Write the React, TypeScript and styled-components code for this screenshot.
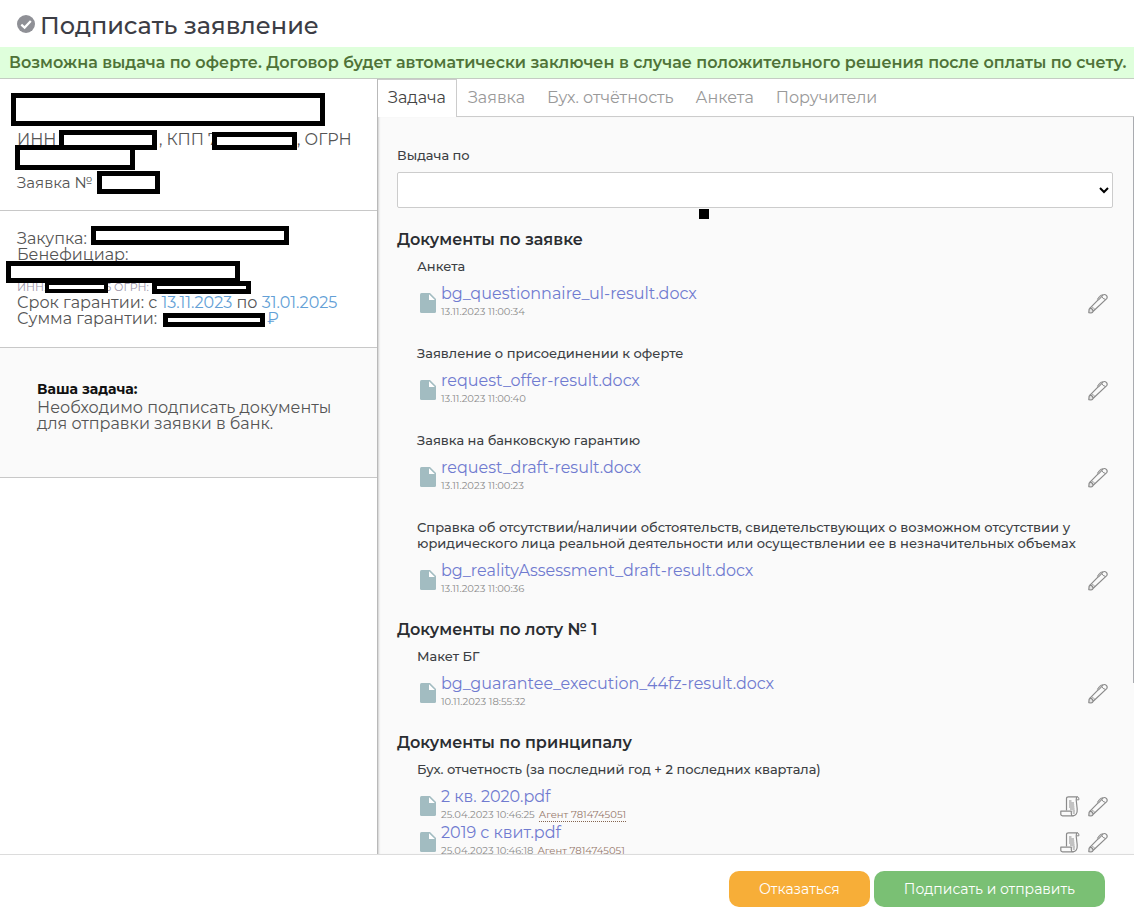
import React from "react";
import styled, { createGlobalStyle } from "styled-components";

const GlobalStyle = createGlobalStyle`
  *, *::before, *::after { box-sizing: border-box; }
  body {
    margin: 0;
    background: #fff;
    color: #25272b;
    font-family: Montserrat, Inter, "Open Sans", sans-serif;
    font-size: 16px;
    font-weight: 400;
  }
  button, select { font: inherit; }
`;

const Page = styled.div`
  display: flex;
  flex-direction: column;
  height: 100vh;
`;

const Header = styled.header`
  display: flex;
  align-items: center;
  gap: 5px;
  padding: 2px 17px 0;
  height: 47px;
  flex: none;
`;

const Title = styled.h1`
  margin: 0;
  font-size: 24px;
  line-height: 30px;
  padding-top: 2px;
  font-weight: 500;
  color: #3c3d45;
`;

const Banner = styled.p`
  margin: 0;
  height: 32px;
  flex: none;
  padding: 0 9px;
  background: #dfffdc;
  border-bottom: 1px solid #c4ccc3;
  color: #4f7338;
  font-size: 16px;
  line-height: 31px;
  font-weight: 600;
  white-space: nowrap;
  overflow: hidden;
`;

const Body = styled.div`
  display: grid;
  grid-template-columns: 378px minmax(0, 1fr);
  flex: 1;
  min-height: 0;
`;

const Sidebar = styled.aside`
  border-right: 1px solid #b9b9b9;
  overflow: hidden;
`;

const Panel = styled.section<{ $muted?: boolean; $pad: string }>`
  position: relative;
  padding: ${(p) => p.$pad};
  border-bottom: 1px solid #c8c8c8;
  background: ${(p) => (p.$muted ? "#fafafa" : "#fff")};
  color: #555;
`;

const Line = styled.div<{ $size?: number; $height?: number; $color?: string }>`
  font-size: ${(p) => p.$size ?? 16}px;
  line-height: ${(p) => p.$height ?? 16}px;
  min-height: ${(p) => p.$height ?? 16}px;
  color: ${(p) => p.$color ?? "inherit"};
  white-space: nowrap;
`;

const Columns = styled(Line)<{ $cols: string }>`
  display: grid;
  grid-template-columns: ${(p) => p.$cols};
`;

const Accent = styled.span`
  color: #639fd6;
`;

const Redaction = styled.span<{ $x: number; $y: number; $w: number; $h: number; $line?: number }>`
  position: absolute;
  left: ${(p) => p.$x}px;
  top: ${(p) => p.$y}px;
  width: ${(p) => p.$w}px;
  height: ${(p) => p.$h}px;
  border: ${(p) => p.$line ?? 5}px solid #000;
  background: #fff;
`;

const TaskTitle = styled.h2`
  margin: 0 0 2px;
  font-size: 14px;
  line-height: 17px;
  font-weight: 700;
  color: #111;
`;

const TaskText = styled.p`
  margin: 0;
  line-height: 16px;
`;

const Main = styled.main`
  position: relative;
  display: flex;
  flex-direction: column;
  min-width: 0;
  min-height: 0;
`;

const Tabs = styled.div`
  display: flex;
  flex: none;
  height: 38px;
  border-bottom: 1px solid #ccc;
`;

const Tab = styled.button<{ $active?: boolean }>`
  padding: 0 11px 1px;
  height: 38px;
  border: 0;
  background: transparent;
  color: #999;
  font-size: 16px;
  cursor: pointer;
  ${(p) =>
    p.$active &&
    `
    padding: 0 10px 2px;
    border: 1px solid #ccc;
    border-width: 1px 1px 0 0;
    background: #fff;
    color: #444;
  `}
`;

const Scroller = styled.div`
  flex: 1;
  min-height: 0;
  overflow-y: auto;
  scrollbar-width: none;
  padding: 30px 21px 0 19px;
  background: #fafafa;
  box-shadow: inset 2px 0 2px -1px #d0d0d0;
`;

const ScrollThumb = styled.div`
  position: absolute;
  top: 38px;
  right: 0;
  width: 1px;
  height: 73%;
  background: #a9abb0;
`;

const Field = styled.div`
  position: relative;
  display: flex;
  flex-direction: column;
  gap: 9px;
  margin-bottom: 22px;
`;

const FieldLabel = styled.label`
  font-size: 13px;
  line-height: 16px;
  font-weight: 500;
  color: #3c3f44;
`;

const Select = styled.select`
  width: 100%;
  height: 36px;
  border: 1px solid #ccc;
  border-radius: 2px;
  background: #fff;
  color: #000;
`;

const Marker = styled.span`
  position: absolute;
  left: 302px;
  top: 62px;
  width: 10px;
  height: 10px;
  background: #000;
`;

const Groups = styled.div`
  display: flex;
  flex-direction: column;
  gap: 24px;
`;

const GroupTitle = styled.h2`
  margin: 0 0 8px;
  font-size: 16px;
  line-height: 20px;
  font-weight: 600;
  color: #2a2d31;
`;

const Items = styled.div`
  display: flex;
  flex-direction: column;
  gap: 26px;
  padding-left: 20px;
`;

const ItemTitle = styled.h3`
  margin: 0 0 9px;
  font-size: 13px;
  line-height: 16px;
  font-weight: 500;
  color: #3c3f44;
`;

const FileRow = styled.div`
  display: flex;
  align-items: flex-end;
  height: 36px;
  padding-left: 3px;
`;

const FileText = styled.div`
  flex: 1;
  min-width: 0;
  padding-left: 5px;
`;

const FileLink = styled.a`
  display: block;
  font-size: 16px;
  line-height: 22px;
  color: #707bd0;
  text-decoration: none;
`;

const Meta = styled.div`
  display: flex;
  gap: 4px;
  font-size: 10px;
  line-height: 14px;
  color: #8a8a8a;
`;

const Agent = styled.abbr`
  height: 14px;
  color: #95786a;
  text-decoration: none;
  border-bottom: 1px dotted #84644f;
`;

const IconWrap = styled.span`
  display: flex;
  padding-bottom: 6px;
`;

const Actions = styled.div`
  display: flex;
  gap: 8px;
  padding: 0 5px 5px 0;
`;

const IconButton = styled.button`
  display: flex;
  padding: 0;
  border: 0;
  background: none;
  cursor: pointer;
`;

const Footer = styled.footer`
  display: flex;
  justify-content: flex-end;
  gap: 4px;
  flex: none;
  padding: 16px 29px 8px;
  border-top: 1px solid #dcdcdc;
  background: #fff;
`;

const Button = styled.button<{ $bg: string }>`
  height: 36px;
  padding: 0 30px;
  border: 0;
  border-radius: 10px;
  background: ${(p) => p.$bg};
  color: #fff;
  font-size: 14px;
  cursor: pointer;
`;

const CheckIcon = () => (
  <svg width="18" height="20" viewBox="0 0 18 20" aria-hidden="true">
    <circle cx="9" cy="9" r="9" fill="#8f9096" />
    <path d="M4.300 9.600 7.600 12.600 13.800 6" fill="none" stroke="#fff" strokeWidth="2.200" />
  </svg>
);

const FileIcon = () => (
  <svg width="16" height="20" viewBox="0 0 16 20" aria-hidden="true">
    <path d="M1.500 0H10l6 6v12.500q0 1.500-1.500 1.500h-13Q0 20 0 18.500v-17Q0 0 1.500 0Z" fill="#a2bcc1" />
    <path d="M9 1.200V7h5.800Z" fill="#fff" />
  </svg>
);

const PenIcon = () => (
  <svg width="20" height="21" viewBox="0 0 20 21" fill="none" stroke="#8a8a8a" strokeLinejoin="round" aria-hidden="true">
    <path d="M5.200 18.200 18.700 5.600Q19.800 4 18.300 2.400 16.800 .9 15 1.900L2 15.200" strokeWidth="1.200" />
    <path d="M2 15.200Q.8 16.200 1 17.500L.8 19.600 3 20Q4.600 19.600 5.200 18.200 4.600 15.400 2 15.200Z" fill="#e4e4e4" strokeWidth="1.200" />
    <path d="M15 1.900Q12.600 1.600 11.200 3.600L9.400 6.200 10.600 7 13.800 3.600Z" fill="#bbb" strokeWidth=".8" />
    <path d="M13.800 3.600Q14.600 5.800 17.400 6.400" />
    <path d="M4 14.200Q6 14.600 6.800 16.600" strokeWidth=".7" />
  </svg>
);

const ScrollIcon = () => (
  <svg width="20" height="21" viewBox="0 0 20 21" fill="none" stroke="#8a8a8a" strokeLinejoin="round" aria-hidden="true">
    <path d="M6.500 14.500V2.500Q6.500 .8 8.500 .8H17.500Q16 1.500 16.200 4L17.200 13Q17.600 19.600 12.800 19.800" strokeWidth="1.200" />
    <path d="M17.500 .8Q19.300 1.300 18.900 3.800H16.500" />
    <path d="M.8 15.200H11.300V18Q11.500 19.800 13 19.800H2.500Q.6 19.800 .8 17.500Z" fill="#fafafa" strokeWidth="1.200" />
    <path d="M9 5h2.500M9 7h5M9 9h5.200M9 11h5.400M10 13h4.600M12.500 15h2.400M12.800 17h2" strokeWidth="1.200" />
  </svg>
);

type Doc = { name: string; date: string; agent?: string; scroll?: boolean };
type Item = { title: string; docs: Doc[] };

const groups: { title: string; items: Item[] }[] = [
  {
    title: "Документы по заявке",
    items: [
      { title: "Анкета", docs: [{ name: "bg_questionnaire_ul-result.docx", date: "13.11.2023 11:00:34" }] },
      { title: "Заявление о присоединении к оферте", docs: [{ name: "request_offer-result.docx", date: "13.11.2023 11:00:40" }] },
      { title: "Заявка на банковскую гарантию", docs: [{ name: "request_draft-result.docx", date: "13.11.2023 11:00:23" }] },
      {
        title:
          "Справка об отсутствии/наличии обстоятельств, свидетельствующих о возможном отсутствии у юридического лица реальной деятельности или осуществлении ее в незначительных объемах",
        docs: [{ name: "bg_realityAssessment_draft-result.docx", date: "13.11.2023 11:00:36" }],
      },
    ],
  },
  {
    title: "Документы по лоту № 1",
    items: [{ title: "Макет БГ", docs: [{ name: "bg_guarantee_execution_44fz-result.docx", date: "10.11.2023 18:55:32" }] }],
  },
  {
    title: "Документы по принципалу",
    items: [
      {
        title: "Бух. отчетность (за последний год + 2 последних квартала)",
        docs: [
          { name: "2 кв. 2020.pdf", date: "25.04.2023 10:46:25", agent: "Агент 7814745051", scroll: true },
          { name: "2019 с квит.pdf", date: "25.04.2023 10:46:18", agent: "Агент 7814745051", scroll: true },
        ],
      },
    ],
  },
];

const tabs = ["Задача", "Заявка", "Бух. отчётность", "Анкета", "Поручители"];

export default function App() {
  const [active, setActive] = React.useState(0);
  return (
    <Page>
      <GlobalStyle />
      <Header>
        <CheckIcon />
        <Title>Подписать заявление</Title>
      </Header>
      <Banner>
        Возможна выдача по оферте. Договор будет автоматически заключен в случае положительного решения после оплаты по счету.
      </Banner>
      <Body>
        <Sidebar>
          <Panel $pad="51px 17px 17px">
            <Columns $height={20} $cols="142px 138px auto">
              <span>ИНН</span>
              <span>, КПП 7</span>
              <span>, ОГРН</span>
            </Columns>
            <Line $height={22} />
            <Line $size={15} $height={21}>Заявка №</Line>
            <Redaction $x={11} $y={14} $w={314} $h={33} />
            <Redaction $x={59} $y={51} $w={98} $h={20} />
            <Redaction $x={212} $y={53} $w={85} $h={18} />
            <Redaction $x={15} $y={66} $w={120} $h={25} />
            <Redaction $x={97} $y={92} $w={63} $h={23} />
          </Panel>
          <Panel $pad="20px 17px">
            <Line>Закупка:</Line>
            <Line>Бенефициар:</Line>
            <Line />
            <Columns $size={11} $cols="88px auto" $color="#9a94a8">
              <span>ИНН:</span>
              <span>5 ОГРН:</span>
            </Columns>
            <Line>
              Срок гарантии: с <Accent>13.11.2023</Accent> по <Accent>31.01.2025</Accent>
            </Line>
            <Columns $cols="250px auto">
              <span>Сумма гарантии:</span>
              <Accent>₽</Accent>
            </Columns>
            <Redaction $x={91} $y={15} $w={198} $h={19} />
            <Redaction $x={6} $y={50} $w={234} $h={22} />
            <Redaction $x={45} $y={70} $w={63} $h={12} $line={4} />
            <Redaction $x={152} $y={70} $w={99} $h={13} />
            <Redaction $x={163} $y={102} $w={102} $h={14} />
          </Panel>
          <Panel $muted $pad="33px 37px 45px">
            <TaskTitle>Ваша задача:</TaskTitle>
            <TaskText>Необходимо подписать документы для отправки заявки в банк.</TaskText>
          </Panel>
        </Sidebar>
        <Main>
          <Tabs role="tablist">
            {tabs.map((t, i) => (
              <Tab key={t} role="tab" aria-selected={i === active} $active={i === active} onClick={() => setActive(i)}>
                {t}
              </Tab>
            ))}
          </Tabs>
          <Scroller>
            <Field>
              <FieldLabel htmlFor="issue">Выдача по</FieldLabel>
              <Select id="issue" defaultValue="">
                <option value="" />
              </Select>
              <Marker />
            </Field>
            <Groups>
              {groups.map((g) => (
                <section key={g.title}>
                  <GroupTitle>{g.title}</GroupTitle>
                  <Items>
                    {g.items.map((it) => (
                      <div key={it.title}>
                        <ItemTitle>{it.title}</ItemTitle>
                        {it.docs.map((d) => (
                          <FileRow key={d.name}>
                            <IconWrap>
                              <FileIcon />
                            </IconWrap>
                            <FileText>
                              <FileLink href="#">{d.name}</FileLink>
                              <Meta>
                                <span>{d.date}</span>
                                {d.agent && <Agent>{d.agent}</Agent>}
                              </Meta>
                            </FileText>
                            <Actions>
                              {d.scroll && (
                                <IconButton aria-label="Протокол">
                                  <ScrollIcon />
                                </IconButton>
                              )}
                              <IconButton aria-label="Подписать">
                                <PenIcon />
                              </IconButton>
                            </Actions>
                          </FileRow>
                        ))}
                      </div>
                    ))}
                  </Items>
                </section>
              ))}
            </Groups>
          </Scroller>
          <ScrollThumb />
        </Main>
      </Body>
      <Footer>
        <Button $bg="#f7ae38">Отказаться</Button>
        <Button $bg="#7ac074">Подписать и отправить</Button>
      </Footer>
    </Page>
  );
}
